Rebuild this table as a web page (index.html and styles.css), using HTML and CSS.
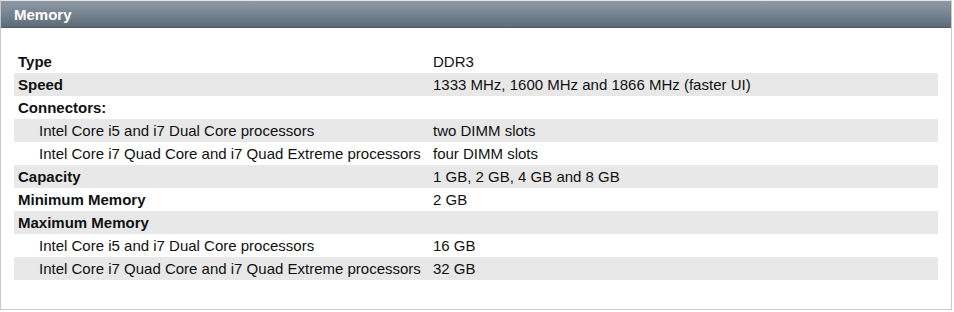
FILE: index.html
```html
<!DOCTYPE html>
<html>
<head>
<meta charset="utf-8">
<link rel="stylesheet" href="styles.css">
</head>
<body>
<div class="panel">
  <div class="panel-head">Memory</div>
  <div class="panel-body">
    <div class="spec">
      <div class="row"><div class="k">Type</div><div class="v">DDR3</div></div>
      <div class="row alt"><div class="k">Speed</div><div class="v">1333 MHz, 1600 MHz and 1866 MHz (faster UI)</div></div>
      <div class="row"><div class="k">Connectors:</div><div class="v"></div></div>
      <div class="row alt"><div class="k sub">Intel Core i5 and i7 Dual Core processors</div><div class="v">two DIMM slots</div></div>
      <div class="row"><div class="k sub">Intel Core i7 Quad Core and i7 Quad Extreme processors</div><div class="v">four DIMM slots</div></div>
      <div class="row alt"><div class="k">Capacity</div><div class="v">1 GB, 2 GB, 4 GB and 8 GB</div></div>
      <div class="row"><div class="k">Minimum Memory</div><div class="v">2 GB</div></div>
      <div class="row alt"><div class="k">Maximum Memory</div><div class="v"></div></div>
      <div class="row"><div class="k sub">Intel Core i5 and i7 Dual Core processors</div><div class="v">16 GB</div></div>
      <div class="row alt"><div class="k sub">Intel Core i7 Quad Core and i7 Quad Extreme processors</div><div class="v">32 GB</div></div>
    </div>
  </div>
</div>
</body>
</html>
```
FILE: styles.css
```css
html, body {
  margin: 0;
  padding: 0;
  background: #fff;
}
body {
  font-family: "Liberation Sans", Arial, sans-serif;
  font-size: 15px;
  color: #111;
}
.panel {
  width: 950px;
  height: 308px;
  border: 1px solid #c9c9c9;
  border-top-color: #e4e4e4;
  display: flex;
  flex-direction: column;
}
.panel-head {
  height: 27px;
  line-height: 27px;
  padding-left: 13px;
  color: #fff;
  font-weight: bold;
  font-size: 15px;
  background: linear-gradient(to bottom, #8e99a5 0%, #76838f 50%, #5d6b79 100%);
  border-bottom: 1px solid #4e5a66;
  box-sizing: border-box;
}
.panel-body {
  padding: 22px 13px 0 13px;
}
.spec {
  display: flex;
  flex-direction: column;
}
.row {
  display: grid;
  grid-template-columns: 415px 1fr;
  height: 23px;
  line-height: 24px;
}
.row.alt {
  background: #e8e8e8;
}
.k {
  padding-left: 4px;
  font-weight: bold;
  white-space: nowrap;
}
.k.sub {
  font-weight: normal;
  padding-left: 25px;
}
.v {
  padding-left: 4px;
}
```
